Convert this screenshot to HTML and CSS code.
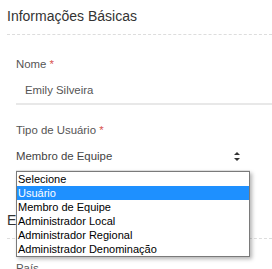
FILE: index.html
```html
<!DOCTYPE html>
<html lang="pt-BR">
<head>
    <meta charset="UTF-8">
    <meta name="viewport" content="width=device-width, initial-scale=1.0">
    <title>Informações Básicas</title>
    <link rel="stylesheet" href="styles.css">
</head>
<body>
    <div class="section">
        <h2 class="section-title">Informações Básicas</h2>
        <div class="fields">
            <div class="field">
                <label class="field-label">Nome <span class="required">*</span></label>
                <div class="field-input">Emily Silveira</div>
            </div>
            <div class="field">
                <label class="field-label">Tipo de Usuário <span class="required">*</span></label>
                <div class="field-select">
                    <span>Membro de Equipe</span>
                    <svg class="select-arrows" width="6" height="9" viewBox="0 0 6 9">
                        <path d="M3 0 L6 3 L0 3 Z" fill="#333"/>
                        <path d="M0 6 L6 6 L3 9 Z" fill="#333"/>
                    </svg>
                    <ul class="select-popup">
                        <li>Selecione</li>
                        <li class="active">Usuário</li>
                        <li>Membro de Equipe</li>
                        <li>Administrador Local</li>
                        <li>Administrador Regional</li>
                        <li>Administrador Denominação</li>
                    </ul>
                </div>
            </div>
        </div>
    </div>
    <div class="section">
        <h2 class="section-title">Endereço</h2>
        <div class="fields">
            <div class="field">
                <label class="field-label">País</label>
            </div>
        </div>
    </div>
</body>
</html>
```

FILE: styles.css
```css
body {
    margin: 0;
    font-family: "Liberation Sans", Arial, sans-serif;
    color: #555;
    background-color: #fff;
}
.section {
    padding: 8px 0 0 7px;
}
.section + .section {
    margin-top: 32px;
}
.section-title {
    margin: 0;
    font-size: 14px;
    line-height: 16px;
    font-weight: normal;
    color: #333;
    padding-bottom: 10px;
    border-bottom: 1px dashed #ddd;
}
.fields {
    padding: 22px 0 0 9px;
}
.field {
    margin-bottom: 18px;
}
.field-label {
    display: block;
    font-size: 11.4px;
    line-height: 14px;
}
.required {
    color: #d9534f;
}
.field-input {
    font-size: 11.4px;
    line-height: 14px;
    padding: 12px 0 6px 9px;
    border-bottom: 2px solid #e8e8e8;
}
.field-select {
    position: relative;
    display: flex;
    align-items: center;
    width: 234px;
    font-size: 11.4px;
    line-height: 14px;
    padding: 12px 0 7px 0;
    border-bottom: 2px solid #e8e8e8;
    color: #444;
}
.select-arrows {
    margin-left: auto;
    margin-right: 10px;
}
.select-popup {
    position: absolute;
    top: 34px;
    left: 0;
    width: 232px;
    margin: 0;
    padding: 0;
    list-style: none;
    background-color: #fff;
    border: 1px solid #7a7a7a;
    box-shadow: 2px 2px 4px rgba(0, 0, 0, 0.3);
    z-index: 10;
}
.select-popup li {
    font-size: 11px;
    line-height: 14px;
    height: 14px;
    padding-left: 1px;
    color: #000;
}
.select-popup li.active {
    background-color: #1e90ff;
    color: #fff;
}
```
